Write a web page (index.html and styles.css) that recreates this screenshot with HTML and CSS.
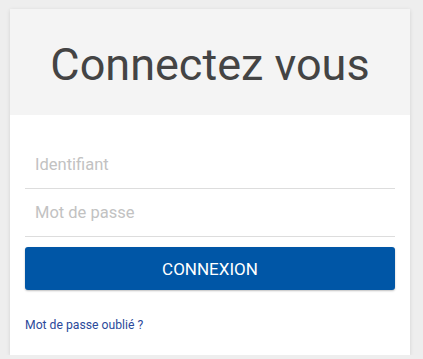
FILE: index.html
```html
<!DOCTYPE html>
<html lang="fr">
<head>
  <meta charset="UTF-8">
  <meta name="viewport" content="width=device-width, initial-scale=1.0">
  <title>Connexion</title>
  <link rel="stylesheet" href="styles.css">
</head>
<body>
  <div class="login-card">
    <div class="login-header">
      <h1 class="login-title">Connectez vous</h1>
    </div>
    <form class="login-form">
      <input class="login-input" type="text" placeholder="Identifiant">
      <input class="login-input" type="password" placeholder="Mot de passe">
      <button class="login-button" type="button">CONNEXION</button>
      <a class="forgot-link" href="#">Mot de passe oublié ?</a>
    </form>
  </div>
</body>
</html>
```

FILE: styles.css
```css
body {
  margin: 0;
  padding: 9px 13px 0 10px;
  background-color: #eeeeee;
  font-family: Roboto, 'Noto Sans', sans-serif;
}

.login-card {
  width: 400px;
  background-color: white;
  box-shadow: 0 1px 4px rgba(0, 0, 0, 0.12);
}

.login-header {
  background-color: #f4f4f4;
  height: 106px;
  display: flex;
  justify-content: center;
  align-items: center;
}

.login-title {
  margin: 0;
  padding-top: 4px;
  font-size: 45px;
  font-weight: 400;
  color: #444444;
}

.login-form {
  display: flex;
  flex-direction: column;
  padding: 26px 15px 23px;
}

.login-input {
  height: 48px;
  border: none;
  border-bottom: 1px solid #dddddd;
  padding: 0 0 0 10px;
  font-family: Roboto, 'Noto Sans', sans-serif;
  font-size: 16.5px;
  color: #444444;
  outline: none;
  box-sizing: border-box;
}

.login-input::placeholder {
  color: #c2c2c2;
}

.login-button {
  margin-top: 10px;
  height: 43px;
  border: none;
  border-radius: 3px;
  background-color: #0056a6;
  color: white;
  font-family: Roboto, 'Noto Sans', sans-serif;
  font-size: 17px;
  box-shadow: 0 1px 2px rgba(0, 0, 0, 0.25);
  cursor: pointer;
}

.forgot-link {
  margin-top: 28px;
  font-size: 12.2px;
  color: #2b4a9b;
  text-decoration: none;
}
```
